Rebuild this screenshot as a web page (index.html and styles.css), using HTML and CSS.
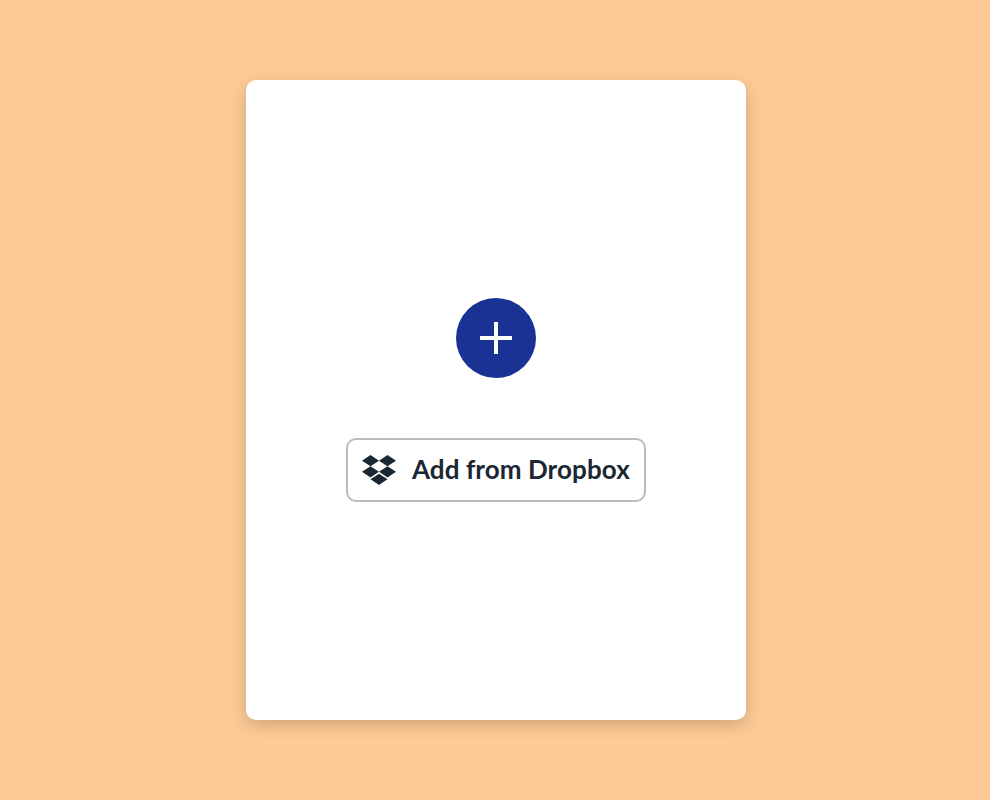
FILE: index.html
```html
<!DOCTYPE html>
<html lang="en">
<head>
  <meta charset="UTF-8">
  <meta name="viewport" content="width=device-width, initial-scale=1.0">
  <title>Add from Dropbox</title>
  <link rel="stylesheet" href="styles.css">
</head>
<body>
  <main class="card">
    <button class="add-button" type="button" aria-label="Add file">
      <svg class="add-icon" viewBox="0 0 32 32" aria-hidden="true">
        <path d="M14 0h4v14h14v4H18v14h-4V18H0v-4h14z"/>
      </svg>
    </button>
    <button class="dropbox-button" type="button">
      <svg class="dropbox-icon" viewBox="0 1.8 24 20.4" preserveAspectRatio="none" aria-hidden="true">
        <path d="M6 1.807L0 5.629l6 3.822 6.001-3.822L6 1.807zM18 1.807l-6 3.822 6 3.822 6-3.822-6-3.822zM0 13.274l6 3.822 6.001-3.822L6 9.452l-6 3.822zM18 9.452l-6 3.822 6 3.822 6-3.822-6-3.822zM6 18.371l6.001 3.822 6-3.822-6-3.822L6 18.371z"/>
      </svg>
      <span class="dropbox-label">Add from Dropbox</span>
    </button>
  </main>
</body>
</html>
```

FILE: styles.css
```css
*, *::before, *::after {
  box-sizing: border-box;
  margin: 0;
  padding: 0;
}

:root {
  --background: #fdca95;
  --card-background: #ffffff;
  --primary-color: #1b3295;
  --text-primary: #1b2733;
  --border-color: #b9bbbe;
}

body {
  font-family: Lato, "Open Sans", sans-serif;
  background-color: var(--background);
  min-height: 800px;
  padding: 80px 0 80px 2px;
  display: flex;
  justify-content: center;
}

.card {
  width: 500px;
  height: 640px;
  background: var(--card-background);
  border-radius: 10px;
  box-shadow: 0 5px 16px rgba(0, 0, 0, 0.18);
  display: flex;
  flex-direction: column;
  align-items: center;
  justify-content: center;
  gap: 60px;
}

.add-button {
  width: 80px;
  height: 80px;
  border: 0;
  border-radius: 50%;
  background-color: var(--primary-color);
  display: flex;
  align-items: center;
  justify-content: center;
}

.add-icon {
  width: 32px;
  height: 32px;
  fill: #ffffff;
}

.dropbox-button {
  width: 300px;
  height: 64px;
  border: 2px solid var(--border-color);
  border-radius: 10px;
  background: var(--card-background);
  color: var(--text-primary);
  font-family: inherit;
  font-size: 26px;
  font-weight: 700;
  display: flex;
  align-items: center;
  gap: 16px;
  padding-left: 14px;
}

.dropbox-label {
  letter-spacing: 0.08px;
  margin-bottom: 3px;
}

.dropbox-icon {
  width: 34px;
  height: 30px;
  fill: var(--text-primary);
}
```
